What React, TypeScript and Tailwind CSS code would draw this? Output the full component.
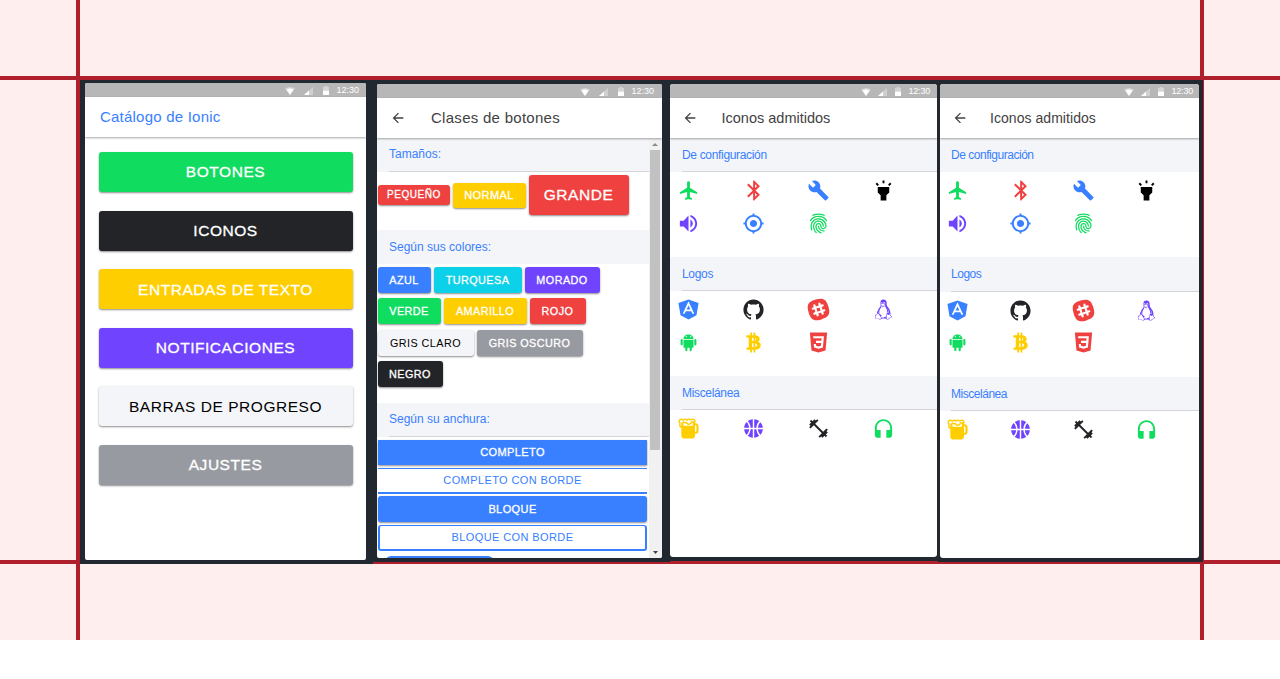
import type { ReactNode } from 'react';
import type { IconType } from 'react-icons';
import {
  IoLogoAndroid,
  IoLogoAngular,
  IoLogoBitcoin,
  IoLogoCss3,
  IoLogoGithub,
  IoLogoSlack,
  IoLogoTux,
  IoMdAirplane,
  IoMdArrowBack,
  IoMdBasketball,
  IoMdBeer,
  IoMdBluetooth,
  IoMdBuild,
  IoMdFingerPrint,
  IoMdFitness,
  IoMdFlashlight,
  IoMdHeadset,
  IoMdLocate,
  IoMdVolumeHigh,
} from 'react-icons/io';

const raised = 'shadow-[0_1px_2px_rgba(0,0,0,0.45)]';
const heavy = '[-webkit-text-stroke:0.3px_currentColor]';

function StatusBar({ className = '', compact = false }: { className?: string; compact?: boolean }) {
  return (
    <div
      className={`flex h-[14px] shrink-0 items-center justify-end bg-[#b7b7b7] pt-px text-[9px] text-white ${
        compact ? 'gap-[7px] tracking-[-0.2px]' : 'gap-[9px]'
      } ${className}`}
    >
      <svg className="h-[8px] w-[10px]" viewBox="0 0 10 8">
        <path d="M0 1.5Q5-1.5 10 1.5L5 8Z" fill="#fff" opacity=".4" />
        <path d="M1.5 2.6Q5 .4 8.500 2.600L5 8Z" fill="#fff" />
      </svg>
      <svg className="h-[8px] w-[9px]" viewBox="0 0 9 8">
        <path d="M9 0V8H0Z" fill="#fff" opacity=".35" />
        <path d="M5 3.600V8H0Z" fill="#fff" />
      </svg>
      <svg className="ml-px h-[9px] w-[6px]" viewBox="0 0 6 9">
        <path d="M1.500 0H4.500V1H6V4.500H0V1H1.500Z" fill="#fff" opacity=".4" />
        <path d="M0 4.500H6V9H0Z" fill="#fff" />
      </svg>
      <span className={`leading-none ${compact ? '' : '-ml-[2px]'}`}>12:30</span>
    </div>
  );
}

function Toolbar({ children, className = '' }: { children: ReactNode; className?: string }) {
  return (
    <div className={`relative z-10 flex h-[40px] shrink-0 items-center whitespace-nowrap bg-white shadow-[0_1px_2px_rgba(0,0,0,0.35)] ${className}`}>
      {children}
    </div>
  );
}

const menu = [
  { label: 'BOTONES', style: 'bg-[#10dc60] text-white [-webkit-text-stroke:0.3px_currentColor]' },
  { label: 'ICONOS', style: 'bg-[#222428] text-white [-webkit-text-stroke:0.3px_currentColor]' },
  { label: 'ENTRADAS DE TEXTO', style: 'bg-[#ffce00] text-white [-webkit-text-stroke:0.3px_currentColor]' },
  { label: 'NOTIFICACIONES', style: 'bg-[#7044ff] text-white [-webkit-text-stroke:0.3px_currentColor]' },
  { label: 'BARRAS DE PROGRESO', style: 'bg-[#f4f5f8] text-black' },
  { label: 'AJUSTES', style: 'bg-[#989aa2] text-white [-webkit-text-stroke:0.3px_currentColor]' },
];

function CatalogScreen() {
  return (
    <div className="flex h-[484px] w-[293px] bg-[#222830] pt-[3px] pr-[7px] pb-[4px] pl-[5px]">
      <div className="flex w-full flex-col overflow-hidden rounded-[2px] bg-white">
        <StatusBar className="pr-[7px]" />
        <Toolbar className="pl-[15px] text-[15px] tracking-[0.22px] text-[#3880ff]">Catálogo de Ionic</Toolbar>
        <div className="flex flex-col gap-[18.6px] pt-[15px] pr-[13px] pl-[14px]">
          {menu.map((item) => (
            <button key={item.label} className={`h-[40px] shrink-0 rounded-[3px] pr-px text-[15.5px] tracking-[0.54px] ${raised} ${item.style}`}>
              {item.label}
            </button>
          ))}
        </div>
      </div>
    </div>
  );
}

function Chip({ label, style }: { label: string; style: string }) {
  return (
    <button className={`flex shrink-0 items-center justify-center whitespace-nowrap rounded-[3px] ${raised} ${style}`}>
      {label}
    </button>
  );
}

const colorRows = [
  [
    { label: 'AZUL', style: 'w-[53px] bg-[#3880ff] text-white' },
    { label: 'TURQUESA', style: 'w-[88px] bg-[#0cd1e8] text-white' },
    { label: 'MORADO', style: 'w-[75px] bg-[#7044ff] text-white' },
  ],
  [
    { label: 'VERDE', style: 'w-[63px] bg-[#10dc60] text-white' },
    { label: 'AMARILLO', style: 'w-[83px] bg-[#ffce00] text-white' },
    { label: 'ROJO', style: 'w-[56px] bg-[#f04141] text-white' },
  ],
  [
    { label: 'GRIS CLARO', style: 'w-[96px] bg-[#f4f5f8] text-black [-webkit-text-stroke:0]' },
    { label: 'GRIS OSCURO', style: 'w-[106px] bg-[#989aa2] text-white' },
  ],
  [{ label: 'NEGRO', style: 'w-[65px] bg-[#222428] text-white' }],
];

function ButtonsScreen() {
  return (
    <div className="flex h-[482px] w-[297px] bg-[#222830] pt-[4px] pr-[8px] pb-[4px] pl-[4px]">
      <div className="flex w-full flex-col overflow-hidden rounded-[2px] bg-white">
        <StatusBar className="pr-[8px]" />
        <Toolbar className="pl-[13px] text-[15px] tracking-[0.28px] text-[#424242]">
          <IoMdArrowBack className="mr-[25px] h-[16px] w-[16px]" />
          Clases de botones
        </Toolbar>
        <div className="flex min-h-0 flex-1">
          <div className="flex w-[272px] flex-col overflow-hidden text-[11px]">
            <div className="flex h-[34px] shrink-0 flex-col bg-[#f4f5f8] pl-[12px] text-[12px] text-[#3880ff]">
              <div className="h-[33px] leading-[33px]">Tamaños:</div>
              <div className="h-px bg-[#d4d5d8]" />
            </div>
            <div className={`flex h-[58px] shrink-0 gap-[3px] pt-[3px] pl-px ${heavy}`}>
              <div className="flex h-[40px] items-center gap-[3px]">
                <Chip label="PEQUEÑO" style="h-[20px] w-[72px] bg-[#f04141] pb-px text-[10px] tracking-[0.55px] text-white" />
                <Chip label="NORMAL" style="h-[25px] w-[73px] bg-[#ffce00] pr-px text-[11px] tracking-[0.4px] text-white" />
                <Chip label="GRANDE" style="h-[40px] w-[100px] bg-[#f04141] pr-px text-[15.5px] tracking-[0.55px] text-white" />
              </div>
            </div>
            <div className="h-[34px] shrink-0 bg-[#f4f5f8] pl-[12px] text-[12px] leading-[34px] text-[#3880ff]">
              Según sus colores:
            </div>
            <div className={`flex h-[139px] shrink-0 flex-col gap-[5.3px] pt-[3px] pl-px text-[10.8px] tracking-[0.45px] ${heavy}`}>
              {colorRows.map((row) => (
                <div key={row[0].label} className="flex gap-[3px]">
                  {row.map((chip) => (
                    <Chip key={chip.label} label={chip.label} style={`h-[26px] pr-px ${chip.style}`} />
                  ))}
                </div>
              ))}
            </div>
            <div className="flex h-[34px] shrink-0 flex-col bg-[#f4f5f8] pl-[12px] text-[12px] text-[#3880ff]">
              <div className="h-[33px] leading-[33px]">Según su anchura:</div>
              <div className="h-px bg-[#d4d5d8]" />
            </div>
            <div className="flex shrink-0 flex-col gap-[3px] pt-[3px] pr-[2px] pl-px text-[11px] tracking-[0.4px] text-[#3880ff]">
              <button className={`h-[25px] bg-[#3880ff] text-white ${heavy} ${raised}`}>COMPLETO</button>
              <button className="h-[26px] border-t border-b-2 border-[#3880ff]">COMPLETO CON BORDE</button>
              <button className={`-mt-px h-[26px] rounded-[3px] bg-[#3880ff] text-white ${heavy} ${raised}`}>BLOQUE</button>
              <button className="h-[26px] rounded-[3px] border-x-2 border-t border-b-2 border-[#3880ff]">BLOQUE CON BORDE</button>
              <div className="mt-[2px] ml-[7px] h-[26px] w-[109px] rounded-[6px] bg-[#3880ff]" />
            </div>
          </div>
          <div className="flex w-[13px] flex-col items-center justify-between bg-[#f1f1f1] pr-px">
            <svg className="mt-[4px] h-[4px] w-[6px] shrink-0" viewBox="0 0 6 4">
              <path d="M0 4L3 1L6 4Z" fill="#8c8c8c" />
            </svg>
            <div className="mt-[4px] h-[300px] w-[10px] bg-[#c1c1c1]" />
            <div className="flex-1" />
            <svg className="mb-[4px] h-[3px] w-[5px] shrink-0" viewBox="0 0 5 3">
              <path d="M0 0H5L2.500 3Z" fill="#444" />
            </svg>
          </div>
        </div>
      </div>
    </div>
  );
}

type Glyph = { icon: IconType; color: string };

const settings: Glyph[] = [
  { icon: IoMdAirplane, color: 'text-[#10dc60]' },
  { icon: IoMdBluetooth, color: 'text-[#f04141]' },
  { icon: IoMdBuild, color: 'text-[#3880ff]' },
  { icon: IoMdFlashlight, color: 'text-black' },
  { icon: IoMdVolumeHigh, color: 'text-[#7044ff]' },
  { icon: IoMdLocate, color: 'text-[#3880ff]' },
  { icon: IoMdFingerPrint, color: 'text-[#10dc60]' },
];

const logos: Glyph[] = [
  { icon: IoLogoAngular, color: 'text-[#3880ff]' },
  { icon: IoLogoGithub, color: 'text-[#222428]' },
  { icon: IoLogoSlack, color: 'text-[#f04141]' },
  { icon: IoLogoTux, color: 'text-[#7044ff]' },
  { icon: IoLogoAndroid, color: 'text-[#10dc60]' },
  { icon: IoLogoBitcoin, color: 'text-[#ffce00]' },
  { icon: IoLogoCss3, color: 'text-[#f04141]' },
];

const misc: Glyph[] = [
  { icon: IoMdBeer, color: 'text-[#ffce00]' },
  { icon: IoMdBasketball, color: 'text-[#7044ff]' },
  { icon: IoMdFitness, color: 'text-[#222428]' },
  { icon: IoMdHeadset, color: 'text-[#10dc60]' },
];

type IconGroupProps = { title: string; items: Glyph[]; head: string; body: string; cols: string; line?: boolean };

function IconGroup({ title, items, head, body, cols, line = true }: IconGroupProps) {
  return (
    <>
      <div className={`flex shrink-0 flex-col bg-[#f4f5f8] text-[12px] text-[#3880ff] ${head}`}>
        <div className="flex flex-1 items-center">{title}</div>
        {line && <div className="h-px bg-[#d4d5d8]" />}
      </div>
      <div className={`grid shrink-0 content-start justify-items-center ${cols} ${body}`}>
        {items.map(({ icon: Icon, color }, i) => (
          <Icon key={i} className={`h-[23px] w-[23px] ${color}`} />
        ))}
      </div>
    </>
  );
}

function IconsScreenWide() {
  const cols = 'w-[260px] ml-[-14px] grid-cols-[65px_65px_65px_65px] auto-rows-[32.5px]';
  const head = 'h-[34px] pl-[12px] tracking-[-0.33px]';
  return (
    <div className="flex h-[481px] w-[268px] bg-[#222830] pt-[4px] pr-px pb-[4px]">
      <div className="flex w-full flex-col overflow-hidden rounded-[3px] bg-white">
        <StatusBar className="pr-[7px]" compact />
        <Toolbar className="pl-[12px] pt-px text-[14.5px] text-[#424242]">
          <IoMdArrowBack className="mr-[23.5px] mb-[2px] h-[16px] w-[16px]" />
          Iconos admitidos
        </Toolbar>
        <IconGroup title="De configuración" items={settings} head={head} body="h-[85px] pt-[7px]" cols={cols} />
        <IconGroup title="Logos" items={logos} head={head} body="h-[85px] pt-[7px]" cols={cols} />
        <IconGroup title="Miscelánea" items={misc} head={head} body="h-[85px] pt-[7px]" cols={cols} />
      </div>
    </div>
  );
}

function IconsScreenNarrow() {
  const cols = 'w-[252px] ml-[-13.6px] grid-cols-[63px_63px_63px_63px] auto-rows-[32.5px]';
  const head = 'pl-[11px] tracking-[-0.47px]';
  return (
    <div className="flex h-[482px] w-[265px] bg-[#222830] pt-[4px] pr-[4px] pb-[4px] pl-[2px]">
      <div className="flex w-full flex-col overflow-hidden rounded-[3px] bg-white">
        <StatusBar className="pr-[6px]" compact />
        <Toolbar className="pl-[11.5px] text-[14px] tracking-[0.05px] text-[#424242]">
          <IoMdArrowBack className="mr-[22.5px] h-[16px] w-[16px]" />
          Iconos admitidos
        </Toolbar>
        <IconGroup title="De configuración" items={settings} head={`h-[34px] ${head}`} body="h-[85px] pt-[7px]" cols={cols} line={false} />
        <IconGroup title="Logos" items={logos} head={`h-[35px] ${head}`} body="h-[85px] pt-[6.5px]" cols={cols} />
        <IconGroup title="Miscelánea" items={misc} head={`h-[34px] ${head}`} body="h-[85px] pt-[6.5px]" cols={cols} />
      </div>
    </div>
  );
}

export default function App() {
  return (
    <div className="h-[679px] w-[1280px] overflow-hidden bg-white font-['Liberation_Sans',Arial,sans-serif]">
      <div className="grid h-[640px] grid-cols-[76px_4px_1120px_4px_76px] grid-rows-[76px_4px_480px_4px_76px] bg-[#ffeeee]">
        <div className="col-start-2 row-start-1 row-end-6 bg-[#b01f2c]" />
        <div className="col-start-4 row-start-1 row-end-6 bg-[#b01f2c]" />
        <div className="col-start-1 col-end-6 row-start-2 bg-[#b01f2c]" />
        <div className="col-start-1 col-end-6 row-start-4 bg-[#b01f2c]" />
        <main className="z-10 col-start-3 col-end-5 row-start-3 row-end-5 flex items-start">
          <CatalogScreen />
          <ButtonsScreen />
          <IconsScreenWide />
          <IconsScreenNarrow />
        </main>
      </div>
    </div>
  );
}
